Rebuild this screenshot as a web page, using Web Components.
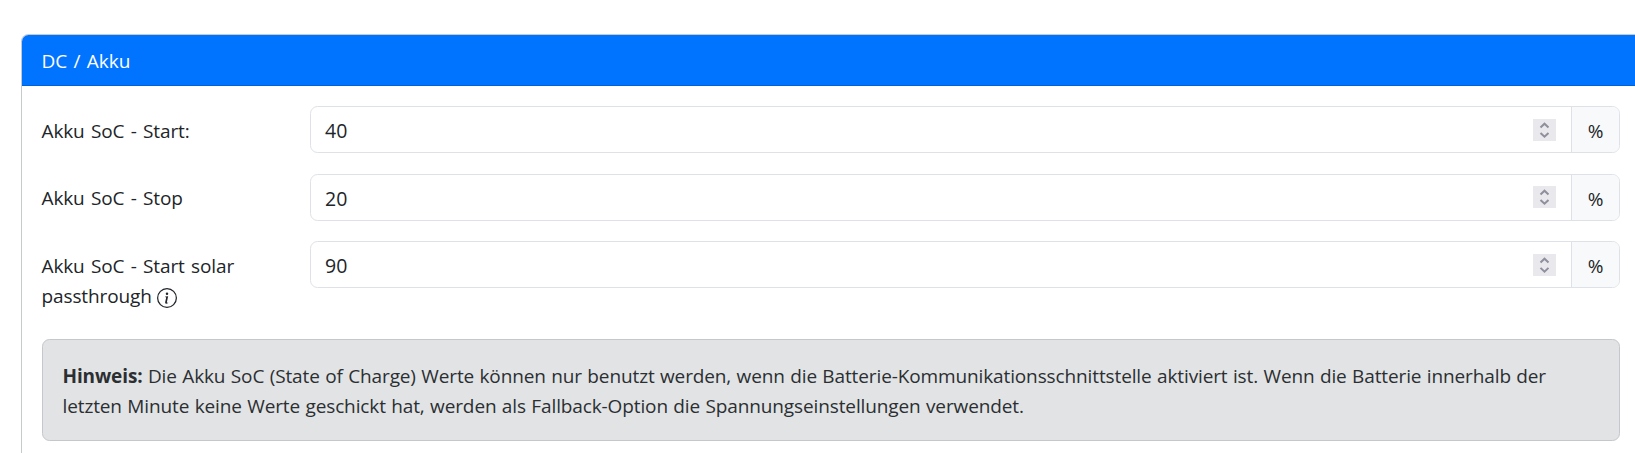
<!DOCTYPE html>
<html lang="de">
<head>
<meta charset="utf-8">
<title>DC / Akku</title>
<style>
html {
    overflow: hidden;
}
body {
    box-sizing: border-box;
    height: 453px;
    margin: 0;
    padding: 34px 0 0 21px;
    background: #fff;
    color: #212529;
    font-family: "Open Sans", "Noto Sans", sans-serif;
    font-size: 19px;
    line-height: 30px;
}
</style>
</head>
<body>
<settings-card>
    <span slot="title">DC / Akku</span>
    <number-row value="40" postfix="%">Akku SoC - Start:</number-row>
    <number-row value="20" postfix="%">Akku SoC - Stop</number-row>
    <number-row value="90" postfix="%">Akku SoC - Start solar passthrough <info-icon></info-icon></number-row>
    <hint-box><b>Hinweis:</b> Die Akku SoC (State of Charge) Werte können nur benutzt werden, wenn die Batterie-Kommunikationsschnittstelle aktiviert ist. Wenn die Batterie innerhalb der letzten Minute keine Werte geschickt hat, werden als Fallback-Option die Spannungseinstellungen verwendet.</hint-box>
</settings-card>

<script>
const SettingsCardTemplate = document.createElement('template');
SettingsCardTemplate.innerHTML = `
<style>
:host {
    display: block;
    box-sizing: border-box;
    width: 1620px;
    height: 419px;
    border: 1px solid #c8c9ca;
    border-bottom: 0;
    border-radius: 7.5px 0 0 0;
    background: #fff;
}
.header {
    padding: 11px 20px 9px 19.5px;
    color: #fff;
    background: #0073ff;
    border-bottom: 1px solid #0062d8;
    border-radius: 6.5px 0 0 0;
    word-spacing: 1.3px;
}
.body {
    display: flex;
    flex-direction: column;
    gap: 20px;
    padding: 20px;
}
</style>
<div class="header"><slot name="title"></slot></div>
<div class="body"><slot></slot></div>
`;

class SettingsCard extends HTMLElement{
    constructor(){
        super();
        this.attachShadow({mode:"open"}).appendChild(SettingsCardTemplate.content.cloneNode(true));
    }
}
customElements.define('settings-card', SettingsCard);

const NumberRowTemplate = document.createElement('template');
NumberRowTemplate.innerHTML = `
<style>
:host {
    display: grid;
    grid-template-columns: 268px 1fr;
    align-items: start;
}
label {
    padding: 9.75px 30px 7.75px 0;
    margin-left: -0.5px;
    letter-spacing: -0.12px;
    word-spacing: 1.5px;
}
.group {
    display: flex;
    box-sizing: border-box;
    height: 47px;
    border: 1px solid #dee2e6;
    border-radius: 7.5px;
    overflow: hidden;
}
.field {
    display: flex;
    flex: 1;
    align-items: center;
    padding: 0 15px 0 14px;
}
input {
    flex: 1;
    box-sizing: border-box;
    min-width: 0;
    height: 32px;
    margin: 0;
    padding: 2px 0 0;
    border: 0;
    outline: none;
    background: none;
    color: inherit;
    font: inherit;
    font-size: 19.5px;
    appearance: textfield;
    -moz-appearance: textfield;
}
input::-webkit-inner-spin-button {
    appearance: none;
    margin: 0;
}
.postfix {
    box-sizing: border-box;
    width: 48px;
    padding-top: 9px;
    border-left: 1px solid #dee2e6;
    background: #f8f9fa;
    text-align: center;
}
.spinner {
    width: 23px;
    height: 22px;
    background: #e9e9ed;
}
</style>
<label for="value"><slot></slot></label>
<div class="group">
    <div class="field">
        <input id="value" type="number">
        <svg class="spinner" viewBox="0 0 23 22" fill="none" stroke="#8f8f9d" stroke-width="2"><path d="M7.5 8.5 11.5 4.7 15.5 8.5M7.5 13.9 11.5 17.7 15.5 13.9"/></svg>
    </div>
    <div class="postfix"></div>
</div>
`;

class NumberRow extends HTMLElement{
    constructor(){
        super();
        this.attachShadow({mode:"open"}).appendChild(NumberRowTemplate.content.cloneNode(true));
        this.inputElement = this.shadowRoot.querySelector("input");
        this.postfixElement = this.shadowRoot.querySelector(".postfix");
    }
    connectedCallback(){
        this.inputElement.value = this.getAttribute("value");
        this.postfixElement.textContent = this.getAttribute("postfix");
    }
    get value(){
        return this.inputElement.value;
    }
    set value(newValue){
        this.inputElement.value = newValue;
    }
}
customElements.define('number-row', NumberRow);

const InfoIconTemplate = document.createElement('template');
InfoIconTemplate.innerHTML = `
<style>
:host {
    display: inline-block;
    width: 20px;
    height: 20px;
    margin-left: -1px;
    vertical-align: -5px;
}
svg {
    display: block;
}
</style>
<svg width="20" height="20" viewBox="0 0 16 16" fill="currentColor">
    <path d="M8 15A7 7 0 1 1 8 1a7 7 0 0 1 0 14m0 1A8 8 0 1 0 8 0a8 8 0 0 0 0 16"/>
    <path d="m8.93 6.588-2.29.287-.082.38.45.083c.294.07.352.176.288.469l-.738 3.468c-.194.897.105 1.319.808 1.319.545 0 1.178-.252 1.465-.598l.088-.416c-.2.176-.492.246-.686.246-.275 0-.375-.193-.304-.533zM9 4.5a1 1 0 1 1-2 0 1 1 0 0 1 2 0"/>
</svg>
`;

class InfoIcon extends HTMLElement{
    constructor(){
        super();
        this.attachShadow({mode:"open"}).appendChild(InfoIconTemplate.content.cloneNode(true));
    }
}
customElements.define('info-icon', InfoIcon);

const HintBoxTemplate = document.createElement('template');
HintBoxTemplate.innerHTML = `
<style>
:host {
    display: block;
    padding: 21px 20px 19px 19.5px;
    color: #2b2f32;
    background: #e2e3e5;
    border: 1px solid #c4c8cb;
    border-radius: 7.5px;
    letter-spacing: -0.12px;
    word-spacing: 0.6px;
}
</style>
<slot></slot>
`;

class HintBox extends HTMLElement{
    constructor(){
        super();
        this.attachShadow({mode:"open"}).appendChild(HintBoxTemplate.content.cloneNode(true));
    }
}
customElements.define('hint-box', HintBox);
</script>
</body>
</html>
